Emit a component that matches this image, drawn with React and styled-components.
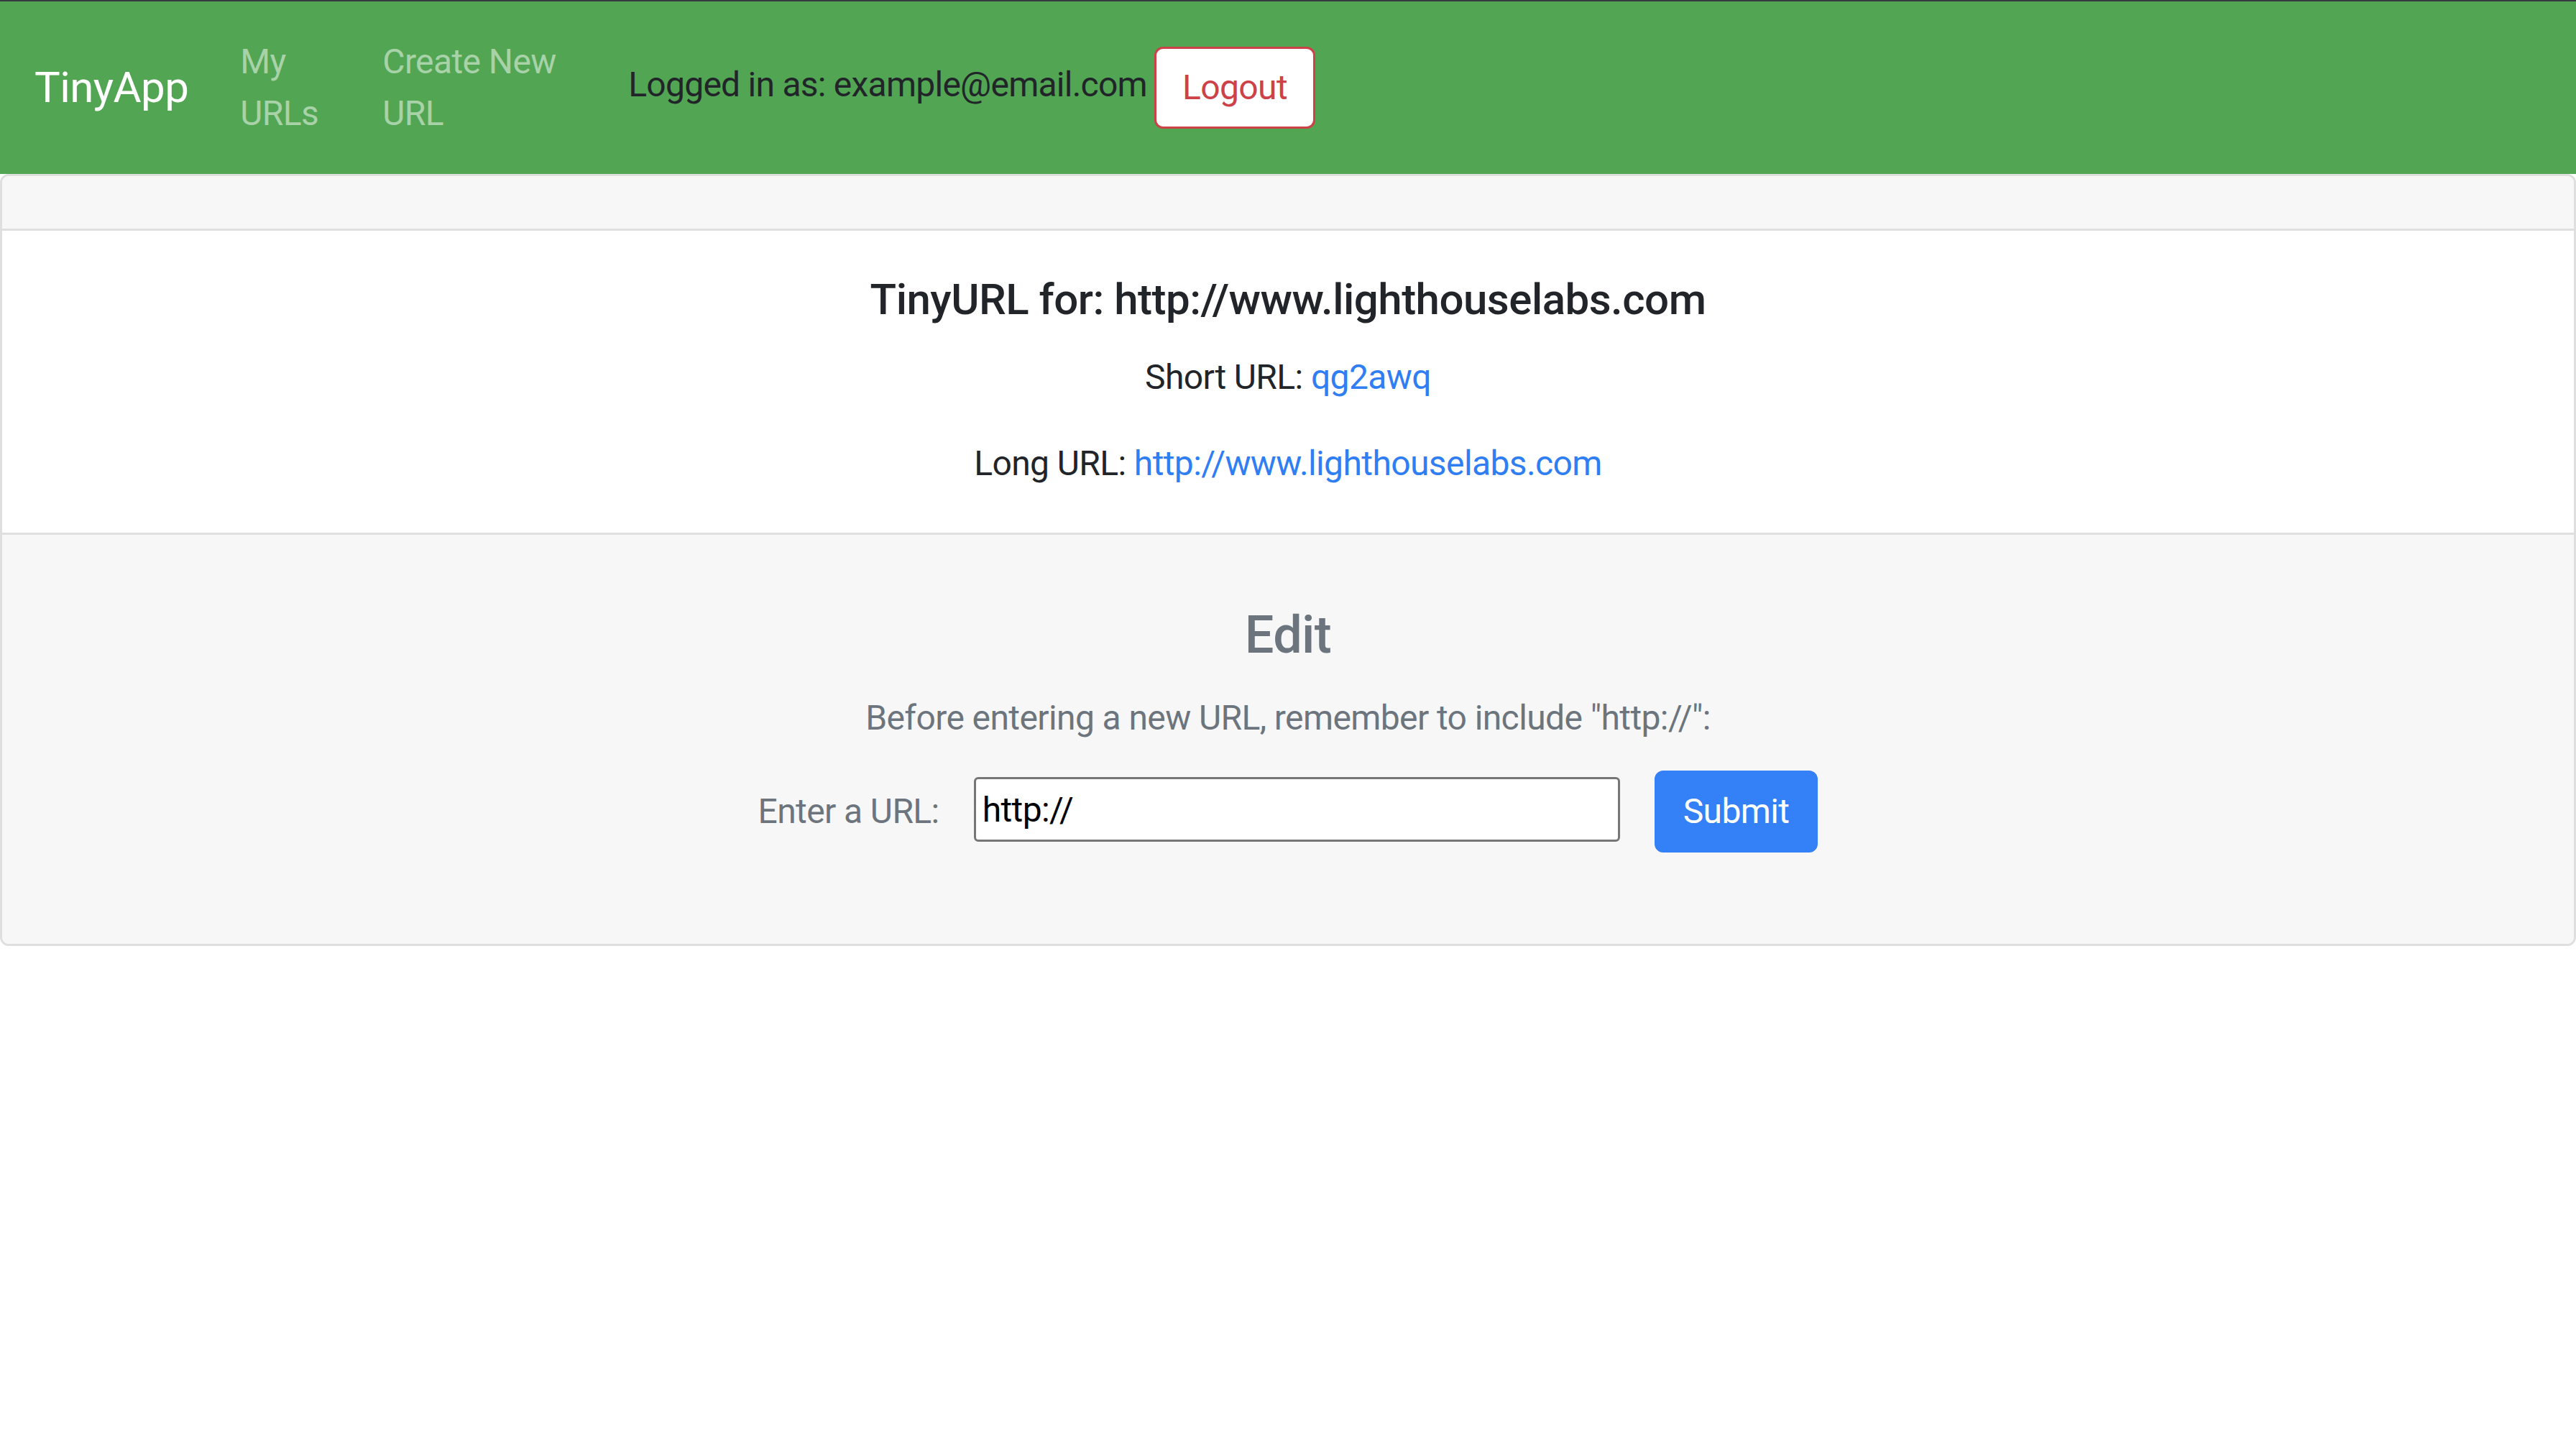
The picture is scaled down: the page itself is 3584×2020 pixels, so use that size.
import React from "react";
import styled, { createGlobalStyle } from "styled-components";

const GlobalStyle = createGlobalStyle`
  html, body { margin: 0; padding: 0; background: #ffffff; }
  body {
    font-family: Roboto, "Liberation Sans", Arial, sans-serif;
    font-size: 48px;
    line-height: 1.5;
    letter-spacing: -0.6px;
    color: #212529;
  }
  * { box-sizing: border-box; }
`;

const TopLine = styled.div`
  height: 2px;
  background: #343a40;
`;

const Navbar = styled.nav`
  display: flex;
  align-items: center;
  background: #52a552;
  padding: 24px 48px;
`;

const Brand = styled.a`
  display: inline-block;
  font-size: 60px;
  line-height: 90px;
  padding: 15px 0;
  margin-right: 48px;
  color: #ffffff;
  text-decoration: none;
  white-space: nowrap;
`;

const NavList = styled.ul`
  display: flex;
  align-items: center;
  list-style: none;
  margin: 0;
  padding: 0;
`;

const NavLink = styled.a`
  display: block;
  padding: 24px;
  width: ${(p) => p.$w}px;
  color: rgba(255, 255, 255, 0.5);
  text-decoration: none;
  line-height: 72px;
`;

const UserArea = styled.div`
  display: flex;
  align-items: center;
  margin-left: ${(p) => p.$ml}px;
`;

const UserText = styled.span`
  color: #212529;
  white-space: nowrap;
  line-height: 72px;
  margin-bottom: 8px;
  letter-spacing: -0.75px;
`;

const LogoutButton = styled.button`
  margin-left: 10px;
  font-family: inherit;
  font-size: 48px;
  letter-spacing: inherit;
  line-height: 72px;
  padding: 18px 36px;
  background: #ffffff;
  color: #cd4248;
  border: 3px solid #cd4248;
  border-radius: 12px;
  cursor: pointer;
`;

const Card = styled.section`
  border: 3px solid #dfdfdf;
  border-radius: 12px;
  overflow: hidden;
`;

const CardHeader = styled.div`
  height: 76px;
  background: #f7f7f7;
  border-bottom: 3px solid #dfdfdf;
`;

const CardBody = styled.div`
  background: #ffffff;
  padding: 60px;
  text-align: center;
`;

const CardTitle = styled.h5`
  margin: 0 0 36px;
  font-size: 60px;
  font-weight: 500;
  line-height: 72px;
  letter-spacing: -0.5px;
  color: #212529;
`;

const CardText = styled.p`
  margin: 0 0 48px;
  line-height: 72px;
  &:last-child { margin-bottom: 0; }
`;

const Link = styled.a`
  color: #2f7ef3;
  text-decoration: none;
`;

const CardFooter = styled.div`
  background: #f7f7f7;
  border-top: 3px solid #dfdfdf;
  padding: 97px 60px 127px;
  text-align: center;
  color: #6c757d;
`;

const FooterTitle = styled.h4`
  margin: 0 0 36px;
  font-size: 72px;
  font-weight: 500;
  line-height: 86px;
  color: #6c757d;
`;

const FooterText = styled.p`
  margin: 0 0 37px;
  line-height: 72px;
`;

const UrlForm = styled.form`
  display: flex;
  align-items: center;
  justify-content: center;
  gap: 48px;
`;

const Label = styled.label`
  color: #6c757d;
  line-height: 72px;
  white-space: nowrap;
`;

const UrlInput = styled.input`
  width: 899px;
  height: 90px;
  font-family: inherit;
  font-size: 48px;
  letter-spacing: inherit;
  color: #000000;
  background: #ffffff;
  border: 3px solid #767676;
  border-radius: 6px;
  padding: 0 9px;
  margin-top: -6px;
  outline: none;
`;

const SubmitButton = styled.button`
  font-family: inherit;
  font-size: 48px;
  letter-spacing: inherit;
  line-height: 72px;
  padding: 18px 37px;
  background: #3480f6;
  color: #ffffff;
  border: 3px solid #3480f6;
  border-radius: 12px;
  cursor: pointer;
`;

export default function App() {
  return (
    <>
      <GlobalStyle />
      <TopLine />
      <Navbar>
        <Brand href="#">TinyApp</Brand>
        <NavList>
          <li><NavLink href="#" $w={198}>My URLs</NavLink></li>
          <li><NavLink href="#" $w={290}>Create New URL</NavLink></li>
        </NavList>
        <UserArea $ml={76}>
          <UserText>Logged in as: example@email.com</UserText>
          <LogoutButton type="button">Logout</LogoutButton>
        </UserArea>
      </Navbar>
      <Card>
        <CardHeader />
        <CardBody>
          <CardTitle>TinyURL for: http://www.lighthouselabs.com</CardTitle>
          <CardText>
            Short URL: <Link href="#">qg2awq</Link>
          </CardText>
          <CardText>
            Long URL: <Link href="#">http://www.lighthouselabs.com</Link>
          </CardText>
        </CardBody>
        <CardFooter>
          <FooterTitle>Edit</FooterTitle>
          <FooterText>Before entering a new URL, remember to include "http://":</FooterText>
          <UrlForm onSubmit={(e) => e.preventDefault()}>
            <Label htmlFor="longURL">Enter a URL:</Label>
            <UrlInput id="longURL" type="text" defaultValue="http://" />
            <SubmitButton type="submit">Submit</SubmitButton>
          </UrlForm>
        </CardFooter>
      </Card>
    </>
  );
}
